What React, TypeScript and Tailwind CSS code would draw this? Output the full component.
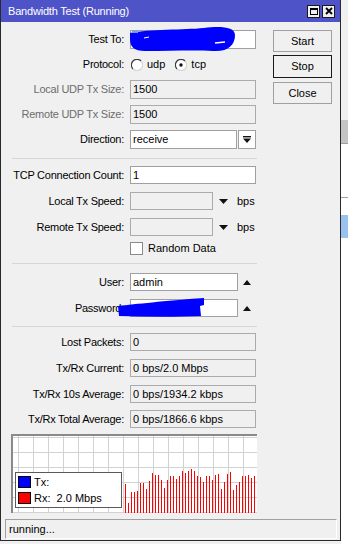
import React from "react";

const bars = [
  29, 10, 21, 21, 22, 30, 30, 24, 32, 40, 38, 38, 33, 25, 33, 37, 37, 34, 37, 42, 40, 42,
  44, 42, 37, 36, 31, 37, 37, 33, 38, 39, 24, 31, 39, 41, 23, 28, 31, 37, 37, 38, 35, 37,
];

function Radio({ checked }: { checked?: boolean }) {
  return (
    <svg width="12" height="12" viewBox="0 0 12 12" className="shrink-0">
      <circle cx="6" cy="6" r="5.3" fill="white" />
      <path d="M10 2 A5.5 5.5 0 0 0 2 10" stroke="#3a3a3a" strokeWidth="1.2" fill="none" />
      <path d="M2 10 A5.5 5.5 0 0 0 10 2" stroke="#d6d6d6" strokeWidth="1.2" fill="none" />
      {checked && <circle cx="6" cy="6" r="1.7" fill="#111" />}
    </svg>
  );
}

function Label({ text, disabled }: { text: string; disabled?: boolean }) {
  return (
    <div
      className={
        "w-[123px] shrink-0 text-right whitespace-nowrap tracking-[-0.25px] " +
        (disabled ? "text-[#6d6d6d]" : "text-black")
      }
    >
      {text}
    </div>
  );
}

function Field({
  value,
  disabled,
  width,
}: {
  value?: string;
  disabled?: boolean;
  width: string;
}) {
  return (
    <div
      className={
        "ml-[6px] h-full flex items-center border pl-[2px] whitespace-nowrap " +
        width +
        " " +
        (disabled ? "bg-[#f0f0f0] border-[#ababab]" : "bg-white border-[#a0a0a0]")
      }
    >
      {value}
    </div>
  );
}

function DownTri() {
  return (
    <svg width="9" height="5" viewBox="0 0 9 5">
      <polygon points="0,0 9,0 4.5,5" fill="#111" />
    </svg>
  );
}

function UpTri() {
  return (
    <svg width="8" height="5" viewBox="0 0 8 5">
      <polygon points="0,5 8,5 4,0" fill="#111" />
    </svg>
  );
}

function Sep({ mt }: { mt: string }) {
  return <div className={"ml-[11px] w-[245px] h-px bg-[#d6d6d6] " + mt} />;
}

export default function App() {
  return (
    <div className="w-[348px] h-[544px] flex bg-[#f0f0f0] overflow-hidden font-['Liberation_Sans',Arial,sans-serif] text-[11px] text-black">
      {/* window */}
      <div className="w-[341px] h-[541px] shrink-0 flex flex-col border-x border-b border-[#2a2a2a]">
        {/* title bar */}
        <div className="h-[22px] shrink-0 bg-[#4f53c8] flex items-center pl-[7px] pr-[5px]">
          <span className="text-white tracking-[-0.2px]">Bandwidth Test (Running)</span>
          <div className="ml-auto flex gap-[2px]">
            <div className="w-[13px] h-[13px] bg-[#f0f0f0] border border-[#1a1a1a] flex items-center justify-center">
              <div className="w-[8px] h-[7px] border border-t-2 border-black" />
            </div>
            <div className="w-[13px] h-[13px] bg-[#f0f0f0] border border-[#1a1a1a] flex items-center justify-center">
              <svg width="8" height="8" viewBox="0 0 8 8">
                <path d="M1 1 L7 7 M7 1 L1 7" stroke="#000" strokeWidth="1.8" />
              </svg>
            </div>
          </div>
        </div>

        {/* body */}
        <div className="flex-1 flex flex-col">
          <div className="flex pt-[8px]">
            {/* form column */}
            <div className="w-[255px] shrink-0 flex flex-col">
              <div className="relative h-[19px] flex items-center">
                <Label text="Test To:" />
                <Field width="w-[126px]" />
                <svg
                  className="absolute left-[128px] top-[-4px]"
                  width="108"
                  height="27"
                  viewBox="0 0 108 27"
                >
                  <path
                    d="M1 7 C 20 3, 55 4, 75 2 C 92 0, 106 1, 106 9 C 106 19, 99 26, 84 25 C 66 24, 40 25, 16 25 C 5 25, 1 21, 1 13 Z"
                    fill="#0000ff"
                  />
                  <rect x="3" y="5" width="6" height="2" fill="#66a0ff" />
                  <path d="M15 12 L20 11" stroke="#ffffff" strokeWidth="1" />
                  <path d="M86 17 L96 16" stroke="#ffffff" strokeWidth="1.5" />
                </svg>
              </div>

              <div className="mt-[6px] h-[19px] flex items-center">
                <Label text="Protocol:" />
                <div className="ml-[7px] flex items-center">
                  <Radio />
                  <span className="ml-[4px]">udp</span>
                  <div className="ml-[10px]">
                    <Radio checked />
                  </div>
                  <span className="ml-[4px]">tcp</span>
                </div>
              </div>

              <div className="mt-[6px] h-[19px] flex items-center">
                <Label text="Local UDP Tx Size:" disabled />
                <Field width="w-[126px]" value="1500" disabled />
              </div>

              <div className="mt-[6px] h-[19px] flex items-center">
                <Label text="Remote UDP Tx Size:" disabled />
                <Field width="w-[126px]" value="1500" disabled />
              </div>

              <div className="mt-[6px] h-[19px] flex items-center">
                <Label text="Direction:" />
                <Field width="w-[108px]" value="receive" />
                <div className="ml-[1px] w-[18px] h-full bg-white border border-[#a0a0a0] flex items-center justify-center">
                  <svg width="8" height="7" viewBox="0 0 8 7">
                    <rect x="0" y="0" width="8" height="1.4" fill="#111" />
                    <polygon points="0,2.5 8,2.5 4,7" fill="#111" />
                  </svg>
                </div>
              </div>

              <Sep mt="mt-[9px]" />

              <div className="mt-[7px] h-[18px] flex items-center">
                <Label text="TCP Connection Count:" />
                <Field width="w-[126px]" value="1" />
              </div>

              <div className="mt-[8px] h-[18px] flex items-center">
                <Label text="Local Tx Speed:" />
                <Field width="w-[83px]" disabled />
                <div className="ml-[6px] flex items-center">
                  <DownTri />
                </div>
                <span className="ml-[9px]">bps</span>
              </div>

              <div className="mt-[8px] h-[18px] flex items-center">
                <Label text="Remote Tx Speed:" />
                <Field width="w-[83px]" disabled />
                <div className="ml-[6px] flex items-center">
                  <DownTri />
                </div>
                <span className="ml-[9px]">bps</span>
              </div>

              <div className="mt-[6px] h-[13px] flex items-center">
                <div className="ml-[129px] w-[13px] h-[13px] bg-white border border-[#8a8a8a]" />
                <span className="ml-[5px]">Random Data</span>
              </div>

              <Sep mt="mt-[8px]" />

              <div className="mt-[9px] h-[18px] flex items-center">
                <Label text="User:" />
                <Field width="w-[108px]" value="admin" />
                <div className="ml-[5px] flex items-center">
                  <UpTri />
                </div>
              </div>

              <div className="relative mt-[8px] h-[18px] flex items-center">
                <Label text="Password:" />
                <Field width="w-[108px]" />
                <div className="ml-[5px] flex items-center">
                  <UpTri />
                </div>
                <svg
                  className="absolute left-[116px] top-[-1px]"
                  width="88"
                  height="20"
                  viewBox="0 0 88 20"
                >
                  <path
                    d="M1 8 C 20 6, 45 3, 87 0 L 87 7 L 83 8 L 84 18 C 60 19, 30 19, 2 18 Z"
                    fill="#0000ff"
                  />
                </svg>
              </div>

              <Sep mt="mt-[9px]" />

              <div className="mt-[6px] h-[18px] flex items-center">
                <Label text="Lost Packets:" />
                <Field width="w-[126px]" value="0" disabled />
              </div>
              <div className="mt-[8px] h-[18px] flex items-center">
                <Label text="Tx/Rx Current:" />
                <Field width="w-[126px]" value="0 bps/2.0 Mbps" disabled />
              </div>
              <div className="mt-[8px] h-[18px] flex items-center">
                <Label text="Tx/Rx 10s Average:" />
                <Field width="w-[126px]" value="0 bps/1934.2 kbps" disabled />
              </div>
              <div className="mt-[7px] h-[18px] flex items-center">
                <Label text="Tx/Rx Total Average:" />
                <Field width="w-[126px]" value="0 bps/1866.6 kbps" disabled />
              </div>

              {/* chart */}
              <div className="relative mt-[6px] ml-[10px] w-[246px] h-[79px] border-t-2 border-l-2 border-[#8a8a8a] bg-white overflow-hidden">
                <svg width="244" height="77" viewBox="0 0 244 77" className="block">
                  {Array.from({ length: 16 }).map((_, k) => (
                    <rect key={"v" + k} x={5 + 15 * k} y="0" width="1" height="77" fill="#d2d2d2" />
                  ))}
                  {Array.from({ length: 6 }).map((_, k) => (
                    <rect key={"h" + k} x="0" y={1 + 15 * k} width="244" height="1" fill="#d2d2d2" />
                  ))}
                  {bars.map((h, i) => (
                    <rect key={i} x={112 + 3 * i} y={77 - h} width="1" height={h} fill="#ff0000" />
                  ))}
                </svg>
                <div className="absolute left-[2px] top-[36px] w-[107px] h-[36px] bg-white border border-[#5a5a5a] flex flex-col pl-[2px] pt-[3px] gap-[4px]">
                  <div className="flex items-center h-[12px]">
                    <div className="w-[13px] h-[12px] bg-[#0000ff] border border-black" />
                    <span className="ml-[3px]">Tx:</span>
                  </div>
                  <div className="flex items-center h-[12px]">
                    <div className="w-[13px] h-[12px] bg-[#ff0000] border border-black" />
                    <span className="ml-[3px] whitespace-pre">Rx:  2.0 Mbps</span>
                  </div>
                </div>
              </div>
            </div>

            {/* buttons */}
            <div className="ml-[17px] w-[59px] flex flex-col">
              <div className="h-[22px] bg-[#f0f0f0] border border-[#a0a0a0] flex items-center justify-center">
                Start
              </div>
              <div className="mt-[3px] h-[23px] bg-[#f0f0f0] border border-[#1a1a1a] flex items-center justify-center">
                Stop
              </div>
              <div className="mt-[4px] h-[22px] bg-[#f0f0f0] border border-[#a0a0a0] flex items-center justify-center">
                Close
              </div>
            </div>
          </div>

          {/* status bar */}
          <div className="mt-[6px] ml-[4px] w-[332px] h-[20px] border-t border-l border-[#a0a0a0] border-r border-r-white border-b border-b-white flex items-center pl-[3px]">
            running...
          </div>
        </div>
      </div>

      {/* window behind */}
      <div className="flex-1 flex flex-col">
        <div className="h-[120px] bg-[#f0f0f0]" />
        <div className="h-[23px] bg-[#c4c4c4]" />
        <div className="h-[54px] bg-white border-t border-[#a0a0a0]" />
        <div className="h-px bg-[#a0a0a0]" />
        <div className="h-[17px] bg-white" />
        <div className="h-[23px] bg-[#99c2f0]" />
        <div className="flex-1 bg-white" />
      </div>
    </div>
  );
}
